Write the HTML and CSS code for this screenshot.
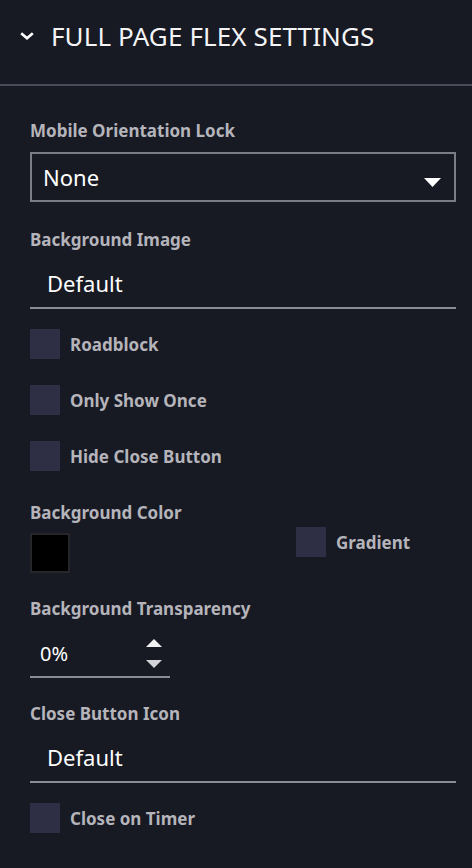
FILE: index.html
```html
<!DOCTYPE html>
<html>
<head>
<meta charset="utf-8">
<link rel="stylesheet" href="styles.css">
</head>
<body>
<div class="panel">
  <div class="header">
    <svg class="chev" width="14" height="8" viewBox="0 0 14 8"><path d="M1.2 1.2 L7 6.2 L12.8 1.2" fill="none" stroke="#ffffff" stroke-width="2.6"/></svg>
    <span class="title">FULL PAGE FLEX SETTINGS</span>
  </div>
  <div class="content">
    <div class="field">
      <div class="label">Mobile Orientation Lock</div>
      <div class="select">
        <span>None</span>
        <svg class="caret" width="17" height="9" viewBox="0 0 17 9"><path d="M0 0 L17 0 L8.5 9 Z" fill="#ffffff"/></svg>
      </div>
    </div>
    <div class="field">
      <div class="label">Background Image</div>
      <div class="underline-input"><span>Default</span></div>
    </div>
    <div class="checks">
      <div class="check"><span class="box"></span><span class="clabel">Roadblock</span></div>
      <div class="check"><span class="box"></span><span class="clabel">Only Show Once</span></div>
      <div class="check"><span class="box"></span><span class="clabel">Hide Close Button</span></div>
    </div>
    <div class="color-row">
      <div class="color-col">
        <div class="label">Background Color</div>
        <div class="swatch"></div>
      </div>
      <div class="check gradient"><span class="box"></span><span class="clabel">Gradient</span></div>
    </div>
    <div class="field trans">
      <div class="label">Background Transparency</div>
      <div class="number">
        <span class="num">0%</span>
        <div class="spin">
          <svg class="up" width="16" height="8" viewBox="0 0 16 8"><path d="M0 8 L16 8 L8 0 Z" fill="#f2f2f4"/></svg>
          <svg class="down" width="16" height="8" viewBox="0 0 16 8"><path d="M0 0 L16 0 L8 8 Z" fill="#d4d4d8"/></svg>
        </div>
      </div>
    </div>
    <div class="field close">
      <div class="label">Close Button Icon</div>
      <div class="underline-input"><span>Default</span></div>
    </div>
    <div class="check last"><span class="box"></span><span class="clabel">Close on Timer</span></div>
  </div>
</div>
</body>
</html>
```
FILE: styles.css
```css
html, body {
  margin: 0;
  padding: 0;
  background: #171923;
}
body {
  font-family: "Noto Sans", "Open Sans", sans-serif;
  color: #ffffff;
  width: 472px;
  height: 868px;
  overflow: hidden;
}
.header {
  box-sizing: border-box;
  height: 86px;
  border-bottom: 2px solid #4a4b58;
  display: flex;
  align-items: flex-start;
  padding: 18px 20px 0 20px;
}
.chev {
  margin-top: 14px;
  margin-right: 17px;
}
.title {
  font-size: 26px;
  line-height: 36px;
  color: #f4f4f6;
  letter-spacing: 0.12px;
}
.content {
  padding: 34px 16px 0 30px;
}
.label {
  font-size: 17px;
  font-weight: 700;
  line-height: 22px;
  color: #b4b4ba;
}
.select {
  box-sizing: border-box;
  height: 50px;
  margin-top: 10px;
  border: 2px solid #7b7c86;
  display: flex;
  align-items: center;
  justify-content: space-between;
  padding: 0 13px 0 11px;
  font-size: 22px;
}
.caret {
  margin-top: 10px;
}
.field + .field {
  margin-top: 27px;
}
.underline-input {
  box-sizing: border-box;
  height: 58px;
  border-bottom: 2px solid #8a8b95;
  display: flex;
  align-items: center;
  padding: 8px 0 0 17px;
  font-size: 22px;
}
.checks {
  margin-top: 20px;
  display: flex;
  flex-direction: column;
  gap: 26px;
}
.check {
  display: flex;
  align-items: center;
  height: 30px;
}
.box {
  width: 30px;
  height: 30px;
  background: #2e2f45;
  flex: none;
}
.clabel {
  margin-left: 10px;
  font-size: 17px;
  font-weight: 700;
  color: #b4b4ba;
}
.color-row {
  margin-top: 31px;
  display: flex;
  align-items: flex-start;
}
.color-col {
  width: 266px;
}
.swatch {
  box-sizing: border-box;
  width: 40px;
  height: 40px;
  margin-top: 9px;
  background: #000000;
  border: 2px solid #26262a;
}
.gradient {
  margin-top: 25px;
}
.field.trans {
  margin-top: 25px;
}
.number {
  box-sizing: border-box;
  width: 140px;
  height: 58px;
  border-bottom: 2px solid #8a8b95;
  display: flex;
  align-items: center;
  justify-content: space-between;
  padding: 10px 8px 0 10px;
  font-size: 20px;
}
.spin {
  align-self: flex-start;
  margin-top: 9px;
  display: flex;
  flex-direction: column;
  gap: 13px;
}
.spin svg {
  display: block;
}
.field.close {
  margin-top: 25px;
}
.last {
  margin-top: 20px;
}
```
